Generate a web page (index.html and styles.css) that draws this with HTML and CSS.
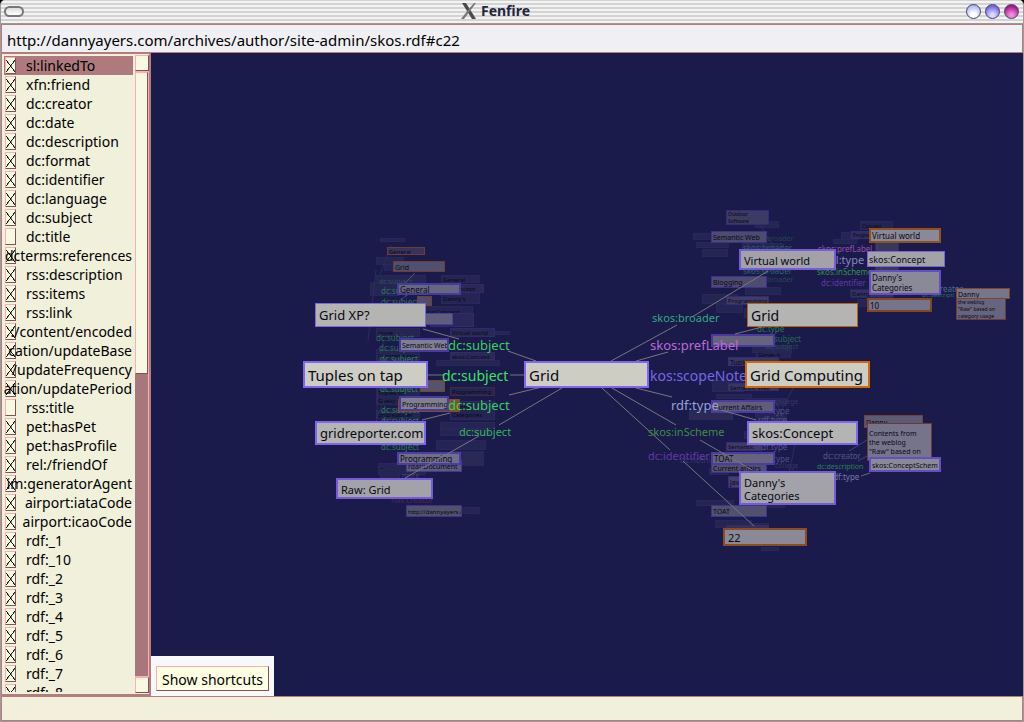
FILE: index.html
```html
<!DOCTYPE html>
<html lang="en">
<head>
<meta charset="utf-8">
<title>Fenfire</title>
<link rel="stylesheet" href="styles.css">
</head>
<body>
<div class="window">
  <header class="titlebar">
    <button class="menu-button" aria-label="Window menu"></button>
    <h1 class="title">
      <svg class="logo" viewBox="0 0 16 16" aria-hidden="true"><path d="M1 0h4l10 16h-4z" fill="#4a4a4a"/><path d="M13 0h2L9 8 3 16H0l7-9z" fill="#777"/></svg>
      Fenfire
    </h1>
    <div class="controls">
      <button class="orb orb-light" aria-label="Minimize"></button>
      <button class="orb orb-blue" aria-label="Maximize"></button>
      <button class="orb orb-pink" aria-label="Close"></button>
    </div>
  </header>
  <input class="address" type="text" aria-label="Address" value="http://dannyayers.com/archives/author/site-admin/skos.rdf#c22">
  <main class="main">
    <aside class="sidebar">
      <div class="properties">
        <label class="row selected"><input type="checkbox" checked><span>sl:linkedTo</span></label>
        <label class="row"><input type="checkbox" checked><span>xfn:friend</span></label>
        <label class="row"><input type="checkbox" checked><span>dc:creator</span></label>
        <label class="row"><input type="checkbox" checked><span>dc:date</span></label>
        <label class="row"><input type="checkbox" checked><span>dc:description</span></label>
        <label class="row"><input type="checkbox" checked><span>dc:format</span></label>
        <label class="row"><input type="checkbox" checked><span>dc:identifier</span></label>
        <label class="row"><input type="checkbox" checked><span>dc:language</span></label>
        <label class="row"><input type="checkbox" checked><span>dc:subject</span></label>
        <label class="row"><input type="checkbox"><span>dc:title</span></label>
        <label class="row long"><input type="checkbox" checked><span>dcterms:references</span></label>
        <label class="row"><input type="checkbox" checked><span>rss:description</span></label>
        <label class="row"><input type="checkbox" checked><span>rss:items</span></label>
        <label class="row"><input type="checkbox" checked><span>rss:link</span></label>
        <label class="row long"><input type="checkbox" checked><span>:/content/encoded</span></label>
        <label class="row long"><input type="checkbox" checked><span>cation/updateBase</span></label>
        <label class="row long"><input type="checkbox" checked><span>/updateFrequency</span></label>
        <label class="row long"><input type="checkbox" checked><span>ation/updatePeriod</span></label>
        <label class="row"><input type="checkbox"><span>rss:title</span></label>
        <label class="row"><input type="checkbox" checked><span>pet:hasPet</span></label>
        <label class="row"><input type="checkbox" checked><span>pet:hasProfile</span></label>
        <label class="row"><input type="checkbox" checked><span>rel:/friendOf</span></label>
        <label class="row long"><input type="checkbox" checked><span>im:generatorAgent</span></label>
        <label class="row long"><input type="checkbox" checked><span>airport:iataCode</span></label>
        <label class="row long"><input type="checkbox" checked><span>airport:icaoCode</span></label>
        <label class="row"><input type="checkbox" checked><span>rdf:_1</span></label>
        <label class="row"><input type="checkbox" checked><span>rdf:_10</span></label>
        <label class="row"><input type="checkbox" checked><span>rdf:_2</span></label>
        <label class="row"><input type="checkbox" checked><span>rdf:_3</span></label>
        <label class="row"><input type="checkbox" checked><span>rdf:_4</span></label>
        <label class="row"><input type="checkbox" checked><span>rdf:_5</span></label>
        <label class="row"><input type="checkbox" checked><span>rdf:_6</span></label>
        <label class="row"><input type="checkbox" checked><span>rdf:_7</span></label>
        <label class="row"><input type="checkbox" checked><span>rdf:_8</span></label>
      </div>
      <div class="scrollbar">
        <button class="step" aria-label="Scroll up"></button>
        <div class="track"><div class="thumb"></div></div>
        <button class="step" aria-label="Scroll down"></button>
      </div>
    </aside>
    <section class="canvas" id="canvas" aria-label="Graph">
      <div class="shortcuts"><button class="shortcuts-button">Show shortcuts</button></div>
    </section>
  </main>
  <footer class="status"></footer>
</div>
<script src="graph.js"></script>
</body>
</html>
```
FILE: styles.css
```css
* { box-sizing: border-box; }
body { margin: 0; background: #000; font-family: "Noto Sans", "Open Sans", sans-serif; font-size: 14px; color: #000; }
button { padding: 0; font: inherit; color: inherit; }

.window { display: flex; flex-direction: column; height: 100vh; border: solid #9c9c9e; border-width: 0 1px 1px; border-radius: 5px 5px 0 0; overflow: hidden; background: #b47c7c; }

.titlebar { display: grid; grid-template-columns: 1fr auto 1fr; align-items: center; height: 24px; flex: none; padding: 0 4px 1px 3px; border-bottom: 1px solid #999; background: repeating-linear-gradient(#d3d3d3 0 1px, #f3f3f3 1px 3px, #d3d3d3 3px 4px); }
.menu-button { width: 20px; height: 11px; border: 2px solid #777; border-radius: 6px; background: linear-gradient(#ddd, #fff); }
.title { display: flex; align-items: center; gap: 4px; margin: 0 32px 0 0; font-size: 14px; line-height: 20px; font-weight: bold; color: #25253d; }
.logo { width: 16px; height: 16px; }
.controls { display: flex; gap: 4px; justify-content: flex-end; }
.orb { width: 15px; height: 15px; border: 1px solid #444468; border-radius: 50%; }
.orb-light { background: radial-gradient(circle at 50% 75%, #fff 20%, #a9b2ef 80%); }
.orb-blue { background: radial-gradient(circle at 50% 80%, #ddd6ff 15%, #7266e0 75%); }
.orb-pink { background: radial-gradient(circle at 50% 80%, #f08ae0 15%, #a01880 75%); }

.address { width: 100%; height: 29px; flex: none; padding: 3px 5px 0; border: 1px solid #b47c7c; border-radius: 0; background: #f0f0f4; font: inherit; font-size: 15px; color: #000; outline: none; }

.main { display: flex; flex: 1; min-height: 0; }
.sidebar { display: flex; width: 150px; flex: none; padding: 1px 0 1px 1px; border: solid #b47c7c; border-width: 1px 2px 2px 1px; background: #f1f0da; }
.properties { flex: 1; min-width: 0; padding-top: 1px; margin: 0 2px 1px 1px; overflow: hidden; }
.row { display: grid; grid-template-columns: minmax(0, 1fr); align-items: center; height: 19px; line-height: 19px; white-space: nowrap; }
.row > * { grid-area: 1 / 1; }
.row span { margin-left: 22px; }
.row.long span { justify-self: end; margin: 0 1px 0 0; }
.selected { background: #ae7a7d; }
.row input { appearance: none; width: 11px; height: 17px; margin: 0 0 0 1px; border: 1px solid; border-color: #ffafb2 #7d5557 #7d5557 #ffafb2; background: #f9f8e2; }
.row input:checked { background: linear-gradient(to top right, transparent 47%, #111 48% 53%, transparent 54%) center / 9px 12px no-repeat, linear-gradient(to bottom right, transparent 47%, #111 48% 53%, transparent 54%) center / 9px 12px no-repeat, #f9f8e2; }
.scrollbar { display: flex; flex-direction: column; width: 14px; flex: none; background: #ffafb2; }
.step { height: 16px; flex: none; border: 1px solid; border-color: #ffafb2 #7d5557 #7d5557 #ffafb2; background: #f9f8e2; }
.track { flex: 1; background: #a8777b; border: solid #ffafb2; border-width: 1px 1px 1px 0; }
.thumb { height: 50%; border: 1px solid; border-color: #ffafb2 #7d5557 #7d5557 #ffafb2; background: #f9f8e2; }

.canvas { position: relative; flex: 1; min-width: 0; overflow: hidden; background: #1a1a4b; }
.shortcuts { position: absolute; left: 0; bottom: 0; padding: 10px 5px 5px; background: #f8f8fa; }
.shortcuts-button { height: 25px; padding: 2px 5px 0; border: 1px solid; border-color: #ffafb2 #7d5557 #7d5557 #ffafb2; background: #ffffe3; line-height: 20px; }
.edges { position: absolute; inset: 0; width: 100%; height: 100%; }
.edges line { stroke: #77777f; stroke-width: 1; }
.node { position: absolute; display: flex; align-items: center; padding: 1px 3px 0; overflow: hidden; white-space: pre; color: #090914; border-style: solid; }
.node.tiny { padding: 1px 1px 0; }
.tag { position: absolute; white-space: nowrap; line-height: 20px; }

.status { height: 25px; flex: none; border: 1px solid #b47c7c; background: #f1f0da; }
```
FILE: graph.js
```js
const canvas = document.getElementById("canvas");
// Graph positions are window coordinates; the canvas starts here.
const origin = { x: 151, y: 53 };
const V = "#8066ee", O = "#d06a08";

// x, y, width, height, fill, border colour, border width, text, text size
function node([x, y, w, h, fill, line, bw, text = "", size = 8]) {
  const el = document.createElement("div");
  el.className = size < 10 ? "node tiny" : "node";
  el.style.cssText = `left:${x - origin.x}px;top:${y - origin.y}px;width:${w}px;height:${h}px;background:${fill};border-color:${line};border-width:${bw}px;font-size:${size}px;line-height:${size > 10 ? 13 : size + 2}px`;
  el.textContent = text;
  canvas.append(el);
}
// text, x, centre y, size, colour
function tag([text, x, y, size, color]) {
  const el = document.createElement("span");
  el.className = "tag";
  el.style.cssText = `left:${x - origin.x}px;top:${y - 11 - origin.y}px;font-size:${size}px;color:${color}`;
  el.textContent = text;
  canvas.append(el);
}
function edges(list) {
  const ns = "http://www.w3.org/2000/svg";
  const svg = document.createElementNS(ns, "svg");
  svg.setAttribute("class", "edges");
  for (const [x1, y1, x2, y2, color] of list) {
    const l = document.createElementNS(ns, "line");
    l.setAttribute("x1", x1 - origin.x); l.setAttribute("y1", y1 - origin.y);
    l.setAttribute("x2", x2 - origin.x); l.setAttribute("y2", y2 - origin.y);
    if (color) l.style.stroke = color;
    svg.append(l);
  }
  canvas.append(svg);
}

const F = "#252553", E = "#29275a";
// Distant nodes
[
  [380,238,25,4,F,E,1], [376,257,28,8,F,E,1], [384,264,24,7,F,E,1], [376,275,50,10,F,E,1], [370,282,30,14,F,E,1],
  [441,275,39,8,F,E,1,"General",6], [450,284,34,9,"#2b2954","#32286c",1,"Concept",6], [441,293,39,11,F,E,1,"Danny's",6],
  [420,306,53,10,F,E,1,"skos:Concept",6], [430,313,44,14,"#292858","#332a70",1], [376,328,44,9,F,E,1,"more",6],
  [450,328,45,9,"#292956","#32296b",1,"Virtual world",6], [495,331,15,4,F,E,1], [450,352,45,8,"#2b2a57","#30296a",1,"skos:Concept",6],
  [436,360,64,6,F,E,1], [376,349,44,12,F,E,1,"Programming",6], [376,387,44,18,F,E,1,"Tuples on\nGeeky Chi",6],
  [450,387,45,9,F,"#45273f",1,"Programming",6], [450,401,45,19,F,"#2b2865",1,"Danny's\nCategories",6], [376,410,44,9,F,E,1,"gridreporter",6],
  [440,422,55,7,F,E,1], [440,429,50,7,F,E,1], [436,440,50,10,F,E,1], [450,451,34,15,"#292956",E,1,"ing",6],
  [378,463,48,12,F,E,1,"Raw",6], [380,469,20,10,F,E,1], [460,507,20,7,F,E,1],
  [693,233,20,7,F,E,1], [696,242,33,6,F,E,1], [702,249,26,8,F,E,1], [755,221,24,7,F,E,1], [742,243,40,7,F,E,1],
  [750,258,28,14,F,E,1], [702,294,36,10,F,E,1], [716,304,27,9,F,E,1], [745,287,36,8,F,E,1], [744,308,10,10,F,E,1],
  [752,345,40,8,F,E,1], [756,350,35,8,F,E,1,"General",6], [712,380,32,12,F,E,1], [716,394,36,5,F,E,1], [689,409,40,5,F,E,1],
  [745,398,42,8,F,E,1], [755,413,32,14,F,E,1], [744,431,20,8,F,E,1], [755,430,40,11,F,E,1], [709,468,20,7,F,E,1],
  [696,500,38,6,F,E,1], [715,520,37,8,F,E,1], [761,547,18,4,F,E,1], [735,523,34,5,F,E,1], [754,499,31,9,F,E,1],
  [860,221,33,9,F,E,1,"Concept",5], [841,232,18,8,F,E,1], [875,238,24,45,"#38385d","#30305a",1], [833,239,24,5,F,E,1],
  [851,231,22,8,"#302e5c","#352978",1,"Program",5], [850,289,44,9,"#32315f",E,1,"Danny",6], [857,299,18,8,F,E,1]
].forEach(node);
edges([
  [391,245,380,275,"#2d2d5c"],[388,300,380,325,"#2d2d5c"],[384,340,376,370,"#2d2d5c"],[384,400,376,420,"#2d2d5c"],
  [415,273,405,283,"#555570"],[420,287,400,300,"#444469"],[376,270,368,340,"#2d2d5c"],[378,380,376,440,"#2d2d5c"],
  [790,378,770,345,"#303059"],[795,445,775,400,"#373763"],[795,445,785,490,"#303059"],[795,385,765,440,"#303059"],
  [760,225,785,265,"#303059"],[875,230,883,280,"#44446b"],[870,473,861,476,"#65658b"],[867,440,849,451,"#45446e"],[867,456,858,461,"#45446e"]
]);
[
  ["dc:subject",379,283,7,"#285451"],["dc:subject",381,292,8,"#2d7653"],["dc:subject",381,303,8,"#2b7450"],["dc:subject",376,339,8,"#287250"],
  ["dc:subject",379,349,8,"#287250"],["dc:subject",380,360,8,"#288550"],["dc:subject",380,390,8,"#288550"],["dc:subject",381,411,8,"#288150"],
  ["dc:subject",381,422,8,"#288150"],["dc:subject",381,448,8,"#287b50"],["has creator",391,501,8,"#4b2b53"],["more",402,477,7,"#40406b"],
  ["skos:broader",743,249,8,"#26625a"],["skos:broader",743,272,8,"#266a60"],["broader",767,240,7,"#254653"],["broader",767,281,7,"#254653"],
  ["dc:type",757,330,8,"#267c55"],["subject",774,340,8,"#266a50"],["dc:subject",765,348,7,"#254c50"],["rdf:type",758,421,8,"#55558f"],
  ["rdf:type",758,448,8,"#55558f"],["type",773,412,8,"#505088"],["type",773,460,8,"#505088"],["college",775,403,7,"#363668"],
  ["college",775,467,7,"#363668"],["dc:nothing",680,461,8,"#37376a"]
].forEach(tag);

// Middle distance
[
  [387,247,38,8,"#37345c","#713b34",1,"General",6], [393,261,52,11,"#51506f","#713d32",1,"Grid",7],
  [417,296,15,10,"#4f4d6a","#71402b",1], [397,283,64,12,"#67667f","#493a9f",2,"General",8], [408,313,45,12,"#5e5d7c","#4c3ca2",1],
  [399,338,50,14,"#807f91","#493a9f",2,"Semantic Web",7], [420,380,25,12,"#55536e","#7b4528",1],
  [398,399,62,13,"#795335","#8b4922",1], [399,396,50,15,"#807f91","#493a9f",2,"Programming",7],
  [406,460,56,12,"#5d5b7b","#45378f",1,"rdaf:Document",7], [397,452,64,13,"#706e8a","#4c3ea5",2,"Programming",8],
  [406,505,56,12,"#51516e","#3f328a",1,"http://dannyayers.c",6],
  [726,210,43,15,"#3c3b63","#34297a",1,"Outdoor\nSoftware",5], [711,231,56,12,"#4d4b6e","#3c3090",1,"Semantic Web",7],
  [711,276,56,12,"#4d4b6e","#3c3090",1,"Blogging",7], [726,296,43,9,"#3f3d65","#34297a",1,"Programming",6],
  [711,334,64,13,"#66647c","#49389d",2], [728,357,51,9,"#38375f","#34297a",1,"Tuples",7], [728,383,51,8,"#38375f","#34297a",1,"Semantic Web",6],
  [689,411,44,9,"#2b2a54","#2e2862",1], [711,400,64,13,"#5f5d7b","#4c3ca2",2,"Current Affairs",7],
  [726,442,37,9,"#3e3b67","#35297a",1,"Semantic",6], [711,462,56,11,"#51506e","#40328e",1,"Current affairs",7],
  [711,452,64,13,"#65637d","#4c3ca2",2,"TOAT",8], [728,476,30,12,"#42406b","#37297d",1,"java",7],
  [726,525,43,10,"#333158","#34297a",1], [711,505,56,12,"#51506e","#3f3191",1,"TOAT",7],
  [864,415,59,13,"#5d5b74","#744230",1,"Danny",7], [867,423,65,38,"#76748b","#693c36",1,"Contents from\nthe weblog\n\"Raw\" based on",7]
].forEach(node);
edges([
  [611,361,677,325],[692,317,768,271],[636,361,668,352],[735,334,766,326],[508,351,536,361],[423,329,459,339],
  [427,375,444,375],[510,375,525,375],[509,395,542,387],[422,420,450,413],[499,425,562,388],[405,478,479,436],
  [636,388,672,397],[721,410,756,420],[612,388,676,425],[700,440,752,470],[602,388,670,450],[683,461,754,526]
]);
[
  ["skos:prefLabel",818,250,8,"#9b50ad"],["ll:type",833,261,11,"#8888c0"],["skos:inScheme",817,273,8,"#37904c"],
  ["dc:identifier",821,284,8,"#603aa8"],["creator",936,290,8,"#487284"],["dc:descripti",922,296,6,"#2c7553"],
  ["dc:creator",823,457,8,"#54578a"],["dc:description",817,468,7,"#2a8153"],["rdf:type",830,478,8,"#7878b0"]
].forEach(tag);

// Foreground
[
  ["dc:subject",448,346,13,"#38cf60"],["dc:subject",442,377,14,"#3be365"],["dc:subject",448,406,13,"#38cf60"],["dc:subject",459,433,11,"#35b45b"],
  ["skos:broader",652,319,11,"#35a880"],["skos:prefLabel",650,346,13,"#bd6bd5"],["rdf:type",671,406,13,"#96a1d9"],
  ["skos:inScheme",648,433,11,"#418b44"],["dc:identifier",648,457,11,"#613ba7"],["kos:scopeNote",650,377,14,"#7867e5"]
].forEach(tag);
[
  [315,303,111,24,"#b4b4b2","#7e68dd",1,"Grid XP?",13], [303,361,125,27,"#cdcdc3",V,2,"Tuples on tap",15],
  [315,421,111,24,"#b4b4b2",V,2,"gridreporter.com",13], [336,478,97,21,"#a2a2a8","#755ae0",2,"Raw: Grid",11],
  [524,361,125,27,"#cdcdc3",V,2,"Grid",15],
  [869,228,72,15,"#8a8997","#91501e",2,"Virtual world",8], [739,249,97,21,"#a2a2a8","#755cd9",2,"Virtual world",11],
  [867,251,78,16,"#a2a2a8","#7a61df",1,"skos:Concept",9], [869,270,72,25,"#8a8997","#654ec1",2,"Danny's\nCategories",8],
  [867,298,65,14,"#76748b","#814622",2,"10",8], [956,297,50,23,"#66647f","#6b3d36",1,"the weblog\n\"Raw\" based on\ncategory usage",5],
  [956,288,54,11,"#777589","#7e4728",1,"Danny",7],
  [747,303,111,24,"#b4b4b2","#b9630f",1,"Grid",14], [745,361,125,27,"#cdcdc3",O,2,"Grid Computing",15],
  [747,421,111,24,"#b4b4b2",V,2,"skos:Concept",13], [739,471,97,34,"#a2a2a8","#755cd9",2,"Danny's\nCategories",11],
  [723,528,84,18,"#8a8997","#8d4b20",2,"22",11], [869,457,72,15,"#8a8997","#654ec1",2,"skos:ConceptSchem",7]
].forEach(node);
```
